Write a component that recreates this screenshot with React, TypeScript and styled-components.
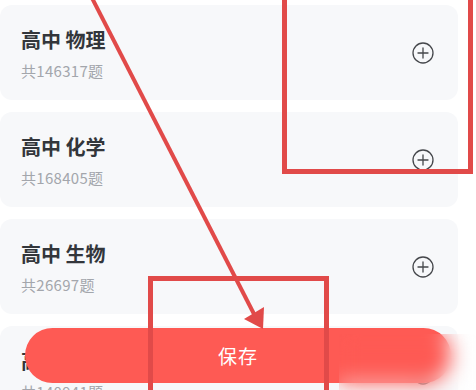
import React from "react";
import styled, { createGlobalStyle } from "styled-components";

const GlobalStyle = createGlobalStyle`
  html, body {
    margin: 0;
    padding: 0;
    background: #ffffff;
    font-family: "Noto Sans CJK SC", "Noto Sans", sans-serif;
    overflow: hidden;
  }
`;

interface Subject {
  name: string;
  count: number;
}

const subjects: Subject[] = [
  { name: "高中 物理", count: 146317 },
  { name: "高中 化学", count: 168405 },
  { name: "高中 生物", count: 26697 },
  { name: "高中 地理", count: 140941 },
];

const Page = styled.div`
  position: relative;
  width: 476px;
  height: 390px;
  overflow: hidden;
`;

const List = styled.div`
  display: flex;
  flex-direction: column;
  gap: 12px;
  padding-top: 5px;
  width: 458px;
`;

const Card = styled.div`
  display: flex;
  align-items: center;
  justify-content: space-between;
  height: 95px;
  box-sizing: border-box;
  padding: 0 24px 0 21px;
  background: #f7f8fa;
  border-radius: 12px;
`;

const Info = styled.div`
  display: flex;
  flex-direction: column;
  gap: 9px;
  padding-top: 3px;
`;

const Title = styled.div`
  font-size: 20px;
  line-height: 24px;
  font-weight: 700;
  color: #33363b;
`;

const Count = styled.div`
  font-size: 15px;
  line-height: 20px;
  color: #a3a6ac;
  letter-spacing: 0.3px;
`;

const AddButton = styled.div`
  display: flex;
  width: 22px;
  height: 22px;
`;

const SaveBar = styled.div`
  position: absolute;
  left: 25px;
  right: 25px;
  bottom: 7px;
  height: 55px;
  border-radius: 28px;
  background: #fe5a54;
  display: flex;
  align-items: center;
  justify-content: center;
  color: #ffffff;
  font-size: 19px;
  letter-spacing: 1px;
`;

const Smudge = styled.div`
  position: absolute;
  left: 339px;
  top: 334px;
  width: 137px;
  height: 56px;
  backdrop-filter: blur(10px);
  -webkit-backdrop-filter: blur(10px);
`;

const Marks = styled.svg`
  position: absolute;
  left: 0;
  top: 0;
  pointer-events: none;
`;

function PlusIcon() {
  return (
    <svg width="22" height="22" viewBox="0 0 22 22">
      <circle cx="11" cy="11" r="10" fill="none" stroke="#45474b" strokeWidth="1.3" />
      <path d="M6 11h10M11 6v10" stroke="#45474b" strokeWidth="1.3" strokeLinecap="round" />
    </svg>
  );
}

export default function App() {
  return (
    <Page>
      <GlobalStyle />
      <List>
        {subjects.map((s) => (
          <Card key={s.name}>
            <Info>
              <Title>{s.name}</Title>
              <Count>共{s.count}题</Count>
            </Info>
            <AddButton>
              <PlusIcon />
            </AddButton>
          </Card>
        ))}
      </List>
      <SaveBar>保存</SaveBar>
      <Smudge />
      <Marks width="476" height="390" viewBox="0 0 476 390">
        <g fill="none" stroke="#e14a49" strokeWidth="5">
          <rect x="284.5" y="-10" width="186" height="181.5" />
          <rect x="150.5" y="278.5" width="176" height="130" />
        </g>
        <line x1="92" y1="-2" x2="254" y2="314" stroke="#e14a49" strokeWidth="4" />
        <polygon points="244,319 263,329 264,307" fill="#e14a49" />
      </Marks>
    </Page>
  );
}
